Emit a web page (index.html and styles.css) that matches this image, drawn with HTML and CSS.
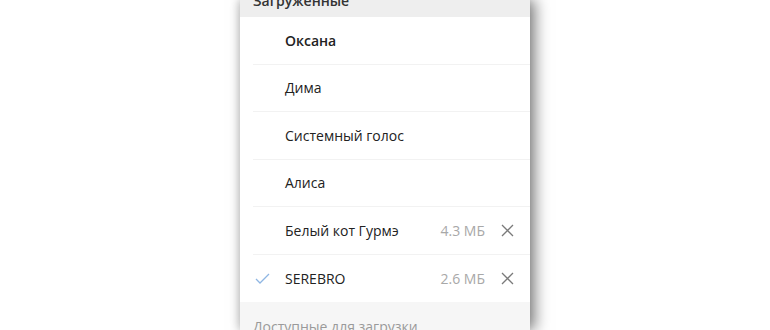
FILE: index.html
```html
<!DOCTYPE html>
<html lang="ru">
<head>
<meta charset="utf-8">
<link rel="stylesheet" href="styles.css">
</head>
<body>
<div class="page">
  <div class="screen">
    <div class="section-head top"><span>Загруженные</span></div>
    <div class="row"><span class="check"></span><span class="name bold">Оксана</span></div>
    <div class="row"><span class="check"></span><span class="name">Дима</span></div>
    <div class="row"><span class="check"></span><span class="name">Системный голос</span></div>
    <div class="row"><span class="check"></span><span class="name">Алиса</span></div>
    <div class="row"><span class="check"></span><span class="name">Белый кот Гурмэ</span><span class="size">4.3 МБ</span>
      <svg class="close" width="13" height="13" viewBox="0 0 13 13"><path d="M1 1L12 12M12 1L1 12" stroke="#7a7a7a" stroke-width="1.3" fill="none"/></svg></div>
    <div class="row"><span class="check"><svg width="15" height="11" viewBox="0 0 15 11"><path d="M1 6L5 10L14 1" stroke="#8fb6e3" stroke-width="1.3" fill="none"/></svg></span><span class="name">SEREBRO</span><span class="size">2.6 МБ</span>
      <svg class="close" width="13" height="13" viewBox="0 0 13 13"><path d="M1 1L12 12M12 1L1 12" stroke="#7a7a7a" stroke-width="1.3" fill="none"/></svg></div>
    <div class="section-head bottom"><span>Доступные для загрузки</span></div>
  </div>
</div>
</body>
</html>
```
FILE: styles.css
```css
html, body {
  margin: 0;
  padding: 0;
  background: #fff;
  height: 330px;
  overflow: hidden;
}
.page {
  display: flex;
  justify-content: center;
  height: 330px;
  font-family: "Open Sans", "Noto Sans", sans-serif;
  font-size: 14px;
  color: #222;
}
.screen {
  width: 290px;
  height: 330px;
  background: #fff;
  box-shadow: 5px 0 14px rgba(0,0,0,0.5), -2px 0 8px rgba(0,0,0,0.12);
  display: flex;
  flex-direction: column;
  overflow: hidden;
}
.section-head {
  padding-left: 13px;
  flex: none;
}
.section-head.top {
  height: 17px;
  background: #eeeeee;
  overflow: hidden;
}
.section-head.top span {
  display: block;
  margin-top: -9px;
  line-height: 20px;
  font-weight: 600;
  color: #333;
}
.section-head.bottom {
  flex: 1;
  background: #f6f6f6;
  padding-top: 15px;
  color: #9a9a9a;
}
.row {
  flex: none;
  height: 47.5px;
  box-sizing: border-box;
  margin-left: 13px;
  padding-right: 16px;
  display: flex;
  align-items: center;
  border-bottom: 1px solid #f2f2f2;
}
.row:nth-last-child(2) {
  border-bottom: none;
}
.check {
  width: 32px;
  flex: none;
  display: flex;
  align-items: center;
  padding-left: 2px;
  box-sizing: border-box;
}
.name {
  flex: 1;
}
.bold {
  font-weight: 600;
}
.size {
  color: #a8a8a8;
  margin-right: 16px;
}
.close {
  flex: none;
}
```
